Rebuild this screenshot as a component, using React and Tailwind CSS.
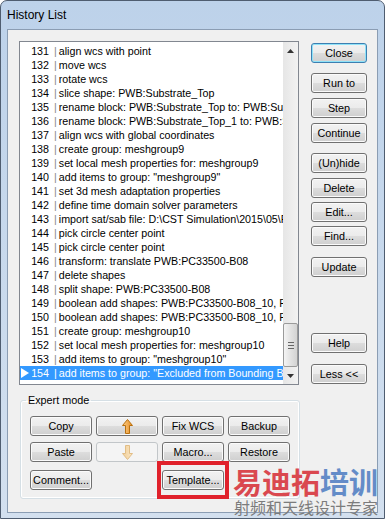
import React from "react";

const rows = [
  [131, "align wcs with point"],
  [132, "move wcs"],
  [133, "rotate wcs"],
  [134, "slice shape: PWB:Substrate_Top"],
  [135, "rename block: PWB:Substrate_Top to: PWB:Substrate_Top_1"],
  [136, "rename block: PWB:Substrate_Top_1 to: PWB:Substrate"],
  [137, "align wcs with global coordinates"],
  [138, "create group: meshgroup9"],
  [139, "set local mesh properties for: meshgroup9"],
  [140, 'add items to group: "meshgroup9"'],
  [141, "set 3d mesh adaptation properties"],
  [142, "define time domain solver parameters"],
  [143, "import sat/sab file: D:\\CST Simulation\\2015\\05\\PWB.sat"],
  [144, "pick circle center point"],
  [145, "pick circle center point"],
  [146, "transform: translate PWB:PC33500-B08"],
  [147, "delete shapes"],
  [148, "split shape: PWB:PC33500-B08"],
  [149, "boolean add shapes: PWB:PC33500-B08_10, PWB:PC33500-B08_11"],
  [150, "boolean add shapes: PWB:PC33500-B08_10, PWB:PC33500-B08_12"],
  [151, "create group: meshgroup10"],
  [152, "set local mesh properties for: meshgroup10"],
  [153, 'add items to group: "meshgroup10"'],
  [154, 'add items to group: "Excluded from Bounding Box"'],
];

const styles = {
  normal:
    "border-[#707070] bg-[linear-gradient(#f2f2f2_0%,#ebebeb_50%,#dddddd_50%,#cfcfcf_100%)] shadow-[inset_0_0_0_1px_#fbfbfb]",
  focus:
    "border-[#3c7fb1] bg-[linear-gradient(#f2f2f2_0%,#ebebeb_50%,#dddddd_50%,#cfcfcf_100%)] shadow-[inset_0_0_0_1px_#8fe2f8]",
  disabled: "border-[#c2c6c9] bg-[#f4f4f4]",
};

function Btn({ children, variant = "normal", className = "" }) {
  return (
    <div
      className={`h-[20px] flex items-center justify-center rounded-[3px] border text-[10.8px] leading-none text-black ${styles[variant]} ${className}`}
    >
      {children}
    </div>
  );
}

function Arrow({ down, pale }) {
  return (
    <svg width="11" height="15" viewBox="0 0 11 15">
      <defs>
        <linearGradient id={pale ? "ap" : "ao"} x1="0" x2="1" y1="0" y2="0">
          <stop offset="0" stopColor={pale ? "#fbe6c4" : "#fdd08a"} />
          <stop offset="1" stopColor={pale ? "#f1cf97" : "#e58a1f"} />
        </linearGradient>
      </defs>
      <polygon
        points="5.5,0.5 10.5,6.5 7.5,6.5 7.5,14.5 3.5,14.5 3.5,6.5 0.5,6.5"
        fill={`url(#${pale ? "ap" : "ao"})`}
        stroke={pale ? "#e1bd86" : "#b8700f"}
        strokeWidth="1"
        transform={down ? "rotate(180 5.5 7.5)" : undefined}
      />
    </svg>
  );
}

export default function App() {
  return (
    <div className="relative w-[385px] h-[519px] overflow-hidden rounded-t-[7px] border border-[#4f5d70] bg-linear-to-b from-[#bdd2ea] to-[#d3e0ef] flex flex-col font-['Liberation_Sans',Arial,sans-serif]">
      <div className="h-[28px] flex items-center pl-[6px] text-[12px] text-black">History List</div>

      <div className="flex-1 mx-[6px] mb-[5px] border border-[#8b9db3] bg-[#f0f0f0] flex pl-[11px] pt-[11px]">
        {/* left column */}
        <div className="w-[281px] flex flex-col">
          <div className="w-[280px] h-[344px] border border-[#828790] bg-white flex">
            <div className="w-[263px] overflow-hidden pt-[2px]">
              {rows.map(([n, t]) => {
                const sel = n === 154;
                return (
                  <div
                    key={n}
                    className={`h-[14px] flex items-center whitespace-nowrap text-[10.7px] ${
                      sel ? "bg-[#3399ff] text-white" : "text-black"
                    }`}
                  >
                    <div className="w-[10px] shrink-0 flex justify-center">
                      {sel && (
                        <svg width="8" height="10" viewBox="0 0 8 10">
                          <polygon points="0,0 8,5 0,10" fill="#fff" />
                        </svg>
                      )}
                    </div>
                    <div className="w-[19px] shrink-0 text-right">{n}</div>
                    <span className={`ml-[5px] shrink-0 ${sel ? "text-white" : "text-[#8a8a8a]"}`}>|</span>
                    <span className="ml-[2px] shrink-0">{t}</span>
                  </div>
                );
              })}
            </div>
            {/* scrollbar */}
            <div className="w-[15px] flex flex-col bg-[linear-gradient(90deg,#e6e6e6,#f2f2f2)]">
              <div className="h-[17px] flex items-center justify-center">
                <svg width="7" height="4" viewBox="0 0 7 4">
                  <polygon points="3.5,0 7,4 0,4" fill="#333" />
                </svg>
              </div>
              <div className="flex-1" />
              <div className="h-[44px] rounded-[2px] border border-[#9a9a9a] bg-[linear-gradient(90deg,#f4f4f4,#e2e2e2_50%,#d3d3d3)] flex flex-col items-center justify-center gap-[2px]">
                <div className="w-[6px] h-[1px] bg-[#666]" />
                <div className="w-[6px] h-[1px] bg-[#666]" />
                <div className="w-[6px] h-[1px] bg-[#666]" />
              </div>
              <div className="h-[17px] flex items-center justify-center">
                <svg width="7" height="4" viewBox="0 0 7 4">
                  <polygon points="0,0 7,0 3.5,4" fill="#333" />
                </svg>
              </div>
            </div>
          </div>

          <fieldset className="mt-[8px] ml-[1px] w-[280px] border border-[#d5dfe5] rounded-[3px] shadow-[inset_0_0_0_1px_#ffffff]">
            <legend className="ml-[5px] px-[2px] text-[10.8px] leading-[14px] text-black">Expert mode</legend>
            <div className="px-[9px] pt-[9px] pb-[8px] flex flex-col">
              <div className="grid grid-cols-[62px_62px_62px_62px] gap-x-[4px]">
                <Btn>Copy</Btn>
                <Btn>
                  <Arrow />
                </Btn>
                <Btn>Fix WCS</Btn>
                <Btn>Backup</Btn>
              </div>
              <div className="grid grid-cols-[62px_62px_62px_62px] gap-x-[4px] mt-[6px]">
                <Btn>Paste</Btn>
                <Btn variant="disabled">
                  <Arrow down pale />
                </Btn>
                <Btn>Macro...</Btn>
                <Btn>Restore</Btn>
              </div>
              <div className="grid grid-cols-[62px_62px_62px_62px] gap-x-[4px] mt-[8px]">
                <Btn>Comment...</Btn>
                <div />
                <div className="relative">
                  <Btn>Template...</Btn>
                  <span className="absolute -left-[5px] -right-[5px] -top-[9px] -bottom-[9px] border-[4px] border-[#e0212b]" />
                </div>
                <div />
              </div>
            </div>
          </fieldset>
        </div>

        {/* right column */}
        <div className="ml-[11px] w-[56px] flex flex-col">
          <Btn variant="focus" className="mt-[2px]">Close</Btn>
          <Btn className="mt-[10px]">Run to</Btn>
          <Btn className="mt-[5px]">Step</Btn>
          <Btn className="mt-[5px]">Continue</Btn>
          <Btn className="mt-[10px]">(Un)hide</Btn>
          <Btn className="mt-[5px]">Delete</Btn>
          <Btn className="mt-[4px]">Edit...</Btn>
          <Btn className="mt-[4px]">Find...</Btn>
          <Btn className="mt-[11px]">Update</Btn>
          <Btn className="mt-[56px]">Help</Btn>
          <Btn className="mt-[11px]">Less &lt;&lt;</Btn>
        </div>
      </div>

      {/* watermark */}
      <div className="absolute right-[6px] bottom-[22px] flex text-[29px] leading-none font-bold font-['Noto_Sans_CJK_SC',sans-serif]">
        <span className="text-[#d8363e] opacity-90">易迪拓</span>
        <span className="text-[#5582c4] opacity-90">培训</span>
      </div>
      <div className="absolute right-[6px] bottom-[3px] text-[16px] leading-none text-[#7c7c7c] font-['Noto_Sans_CJK_SC',sans-serif]">
        射频和天线设计专家
      </div>
    </div>
  );
}
